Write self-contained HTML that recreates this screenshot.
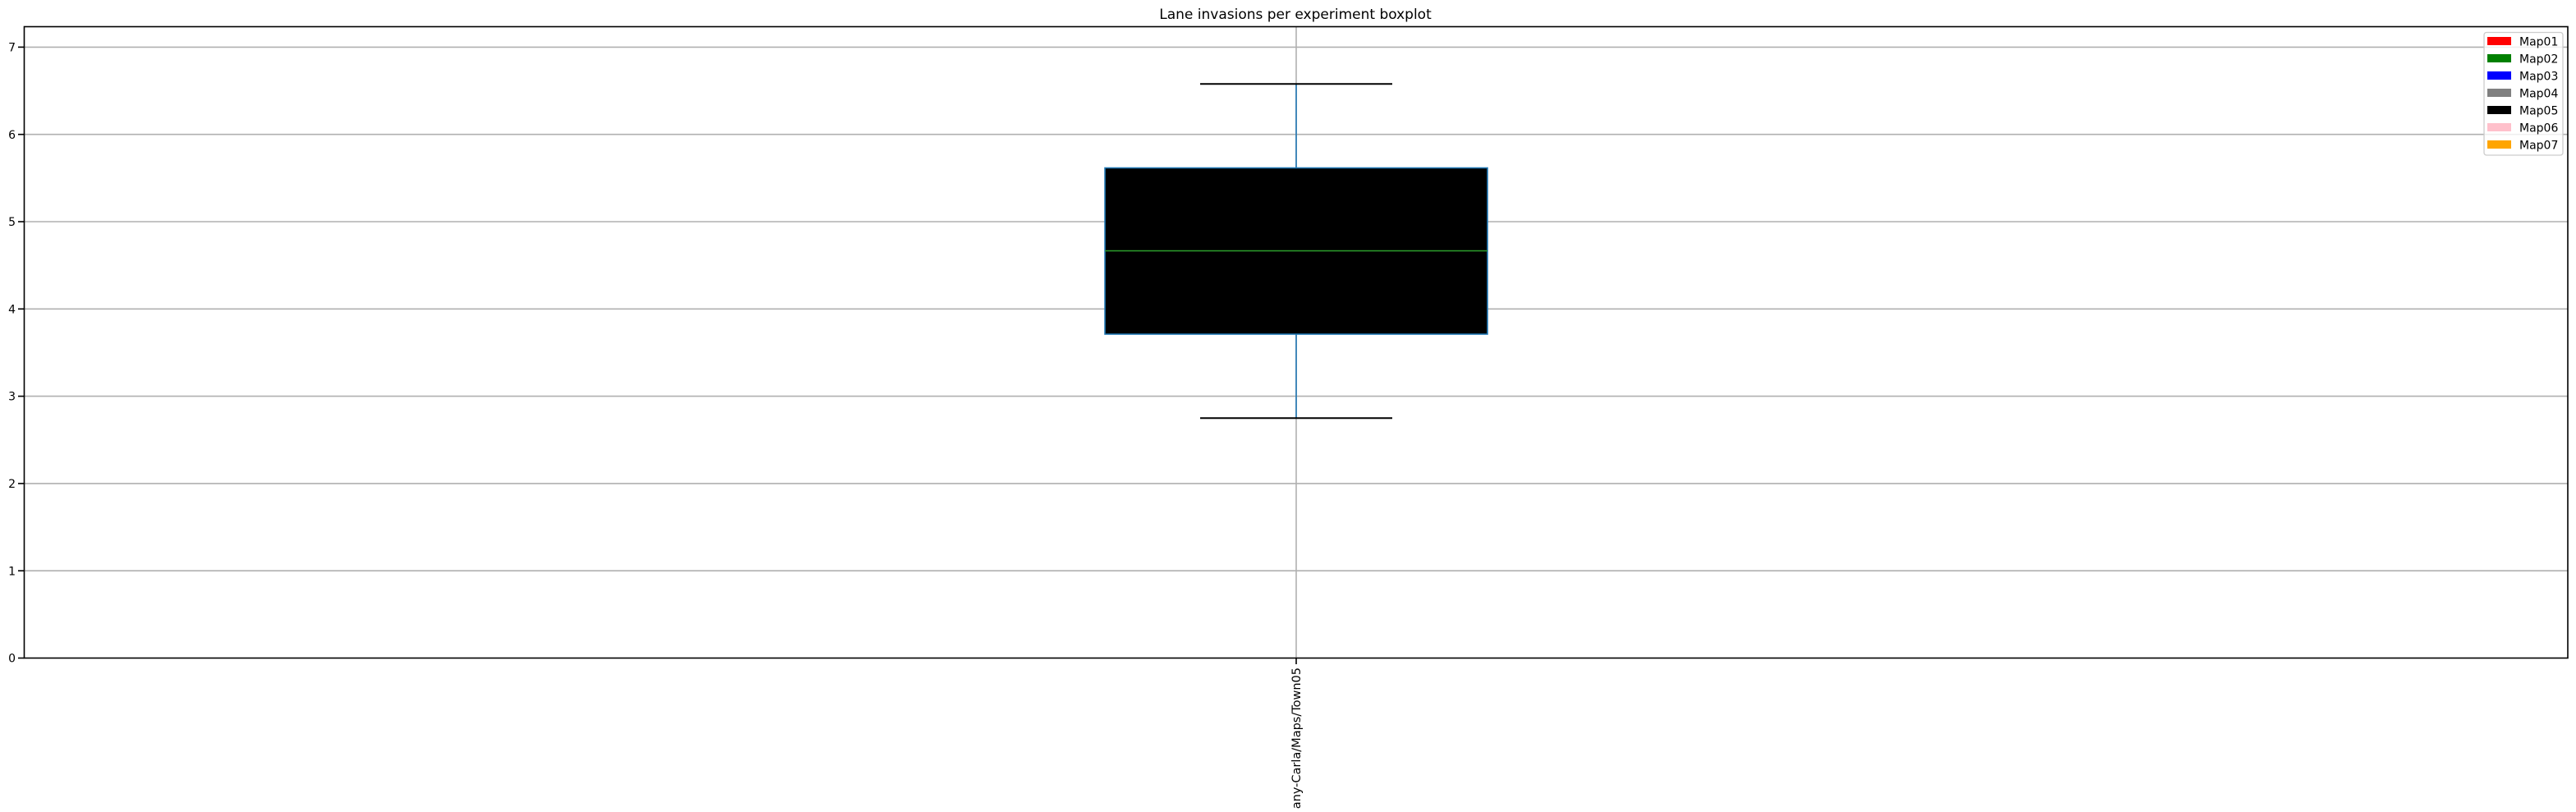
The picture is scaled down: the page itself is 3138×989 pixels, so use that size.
<!DOCTYPE html>
<html><head><meta charset="utf-8"><style>
html,body{margin:0;padding:0;background:#fff;width:3138px;height:989px;overflow:hidden}
svg{display:block}
text{font-family:"DejaVu Sans","Liberation Sans",sans-serif;fill:#000}
</style></head><body>
<svg width="3138" height="989" viewBox="0 0 3138 989" xmlns="http://www.w3.org/2000/svg">
<rect width="3138" height="989" fill="#fff"/>
<g stroke="#b0b0b0" stroke-width="1.6">
<line x1="29.5" x2="3128" y1="57.4" y2="57.4"/>
<line x1="29.5" x2="3128" y1="163.7" y2="163.7"/>
<line x1="29.5" x2="3128" y1="270" y2="270"/>
<line x1="29.5" x2="3128" y1="376.3" y2="376.3"/>
<line x1="29.5" x2="3128" y1="482.6" y2="482.6"/>
<line x1="29.5" x2="3128" y1="588.9" y2="588.9"/>
<line x1="29.5" x2="3128" y1="695.2" y2="695.2"/>
<line x1="1579" x2="1579" y1="32" y2="801.5"/>
</g>
<g stroke="#1f77b4" stroke-width="1.6">
<line x1="1579" x2="1579" y1="102" y2="204"/>
<line x1="1579" x2="1579" y1="407" y2="509"/>
</g>
<rect x="1346" y="204.5" width="466" height="202.5" fill="#000" stroke="#1f77b4" stroke-width="1.6"/>
<line x1="1346" x2="1812" y1="305.5" y2="305.5" stroke="#2ca02c" stroke-width="1.6"/>
<g stroke="#000" stroke-width="2">
<line x1="1462" x2="1696" y1="102.3" y2="102.3"/>
<line x1="1462" x2="1696" y1="509.3" y2="509.3"/>
</g>
<rect x="29.5" y="32.5" width="3098.5" height="769" fill="none" stroke="#000" stroke-width="1.6"/>
<g stroke="#000" stroke-width="1.6">
<line x1="22" x2="29.5" y1="57.4" y2="57.4"/>
<line x1="22" x2="29.5" y1="163.7" y2="163.7"/>
<line x1="22" x2="29.5" y1="270" y2="270"/>
<line x1="22" x2="29.5" y1="376.3" y2="376.3"/>
<line x1="22" x2="29.5" y1="482.6" y2="482.6"/>
<line x1="22" x2="29.5" y1="588.9" y2="588.9"/>
<line x1="22" x2="29.5" y1="695.2" y2="695.2"/>
<line x1="22" x2="29.5" y1="801.5" y2="801.5"/>
<line x1="1579" x2="1579" y1="801.5" y2="809"/>
</g>
<g font-size="14" text-anchor="end">
<text x="19" y="62.5">7</text>
<text x="19" y="168.8">6</text>
<text x="19" y="275.1">5</text>
<text x="19" y="381.4">4</text>
<text x="19" y="487.7">3</text>
<text x="19" y="594">2</text>
<text x="19" y="700.3">1</text>
<text x="19" y="806.6">0</text>
</g>
<text x="1578" y="23" font-size="17" text-anchor="middle">Lane invasions per experiment boxplot</text>
<text transform="translate(1584,813) rotate(-90)" font-size="14.5" text-anchor="end">any-Carla/Maps/Town05</text>
<rect x="3026" y="39.5" width="96" height="149.5" rx="3" fill="#fff" fill-opacity="0.8" stroke="#ccc" stroke-width="1.3"/>
<g>
<rect x="3030" y="45" width="29" height="10" fill="red"/>
<rect x="3030" y="66" width="29" height="10" fill="green"/>
<rect x="3030" y="87" width="29" height="10" fill="blue"/>
<rect x="3030" y="108" width="29" height="10" fill="gray"/>
<rect x="3030" y="129" width="29" height="10" fill="black"/>
<rect x="3030" y="150" width="29" height="10" fill="pink"/>
<rect x="3030" y="171" width="29" height="10" fill="orange"/>
</g>
<g font-size="14">
<text x="3069" y="55.5">Map01</text>
<text x="3069" y="76.5">Map02</text>
<text x="3069" y="97.5">Map03</text>
<text x="3069" y="118.5">Map04</text>
<text x="3069" y="139.5">Map05</text>
<text x="3069" y="160.5">Map06</text>
<text x="3069" y="181.5">Map07</text>
</g>
</svg>
</body></html>
